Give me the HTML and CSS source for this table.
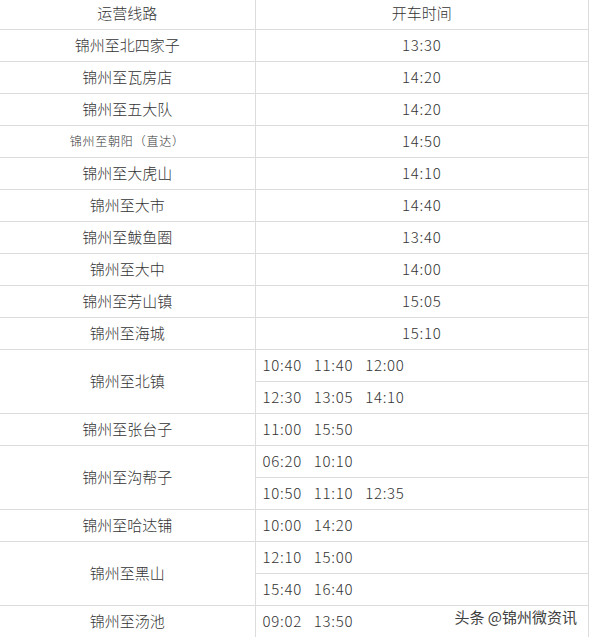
FILE: index.html
```html
<!DOCTYPE html>
<html lang="zh-CN">
<head>
<meta charset="utf-8">
<title>锦州客运班次</title>
<link rel="stylesheet" href="styles.css">
</head>
<body>
<div class="page">
  <table class="schedule">
    <colgroup><col class="c-route"><col class="c-time"></colgroup>
    <tbody>
      <tr><td>运营线路</td><td>开车时间</td></tr>
      <tr><td>锦州至北四家子</td><td class="t">13:30</td></tr>
      <tr><td>锦州至瓦房店</td><td class="t">14:20</td></tr>
      <tr><td>锦州至五大队</td><td class="t">14:20</td></tr>
      <tr><td class="small">锦州至朝阳（直达）</td><td class="t">14:50</td></tr>
      <tr><td>锦州至大虎山</td><td class="t">14:10</td></tr>
      <tr><td>锦州至大市</td><td class="t">14:40</td></tr>
      <tr><td>锦州至鲅鱼圈</td><td class="t">13:40</td></tr>
      <tr><td>锦州至大中</td><td class="t">14:00</td></tr>
      <tr><td>锦州至芳山镇</td><td class="t">15:05</td></tr>
      <tr><td>锦州至海城</td><td class="t">15:10</td></tr>
      <tr><td rowspan="2">锦州至北镇</td><td class="multi"><span>10:40</span><span>11:40</span><span>12:00</span></td></tr>
      <tr><td class="multi"><span>12:30</span><span>13:05</span><span>14:10</span></td></tr>
      <tr><td>锦州至张台子</td><td class="multi"><span>11:00</span><span>15:50</span></td></tr>
      <tr><td rowspan="2">锦州至沟帮子</td><td class="multi"><span>06:20</span><span>10:10</span></td></tr>
      <tr><td class="multi"><span>10:50</span><span>11:10</span><span>12:35</span></td></tr>
      <tr><td>锦州至哈达铺</td><td class="multi"><span>10:00</span><span>14:20</span></td></tr>
      <tr><td rowspan="2">锦州至黑山</td><td class="multi"><span>12:10</span><span>15:00</span></td></tr>
      <tr><td class="multi"><span>15:40</span><span>16:40</span></td></tr>
      <tr><td>锦州至汤池</td><td class="multi"><span>09:02</span><span>13:50</span></td></tr>
    </tbody>
  </table>
  <div class="watermark">头条 @锦州微资讯</div>
</div>
</body>
</html>
```
FILE: styles.css
```css
html, body {
  margin: 0;
  padding: 0;
  background: #fff;
}
.page {
  position: relative;
  width: 589px;
  height: 637px;
  overflow: hidden;
}
.schedule {
  border-collapse: collapse;
  width: 589px;
  margin-top: -3px;
  table-layout: fixed;
  font-family: "Noto Sans CJK SC", "Noto Sans", sans-serif;
  font-size: 15px;
  font-weight: 300;
  color: #333;
}
.c-route { width: 255px; }
.schedule td {
  height: 30px;
  padding: 0 0 1px 0;
  border: 1px solid #dcdcdc;
  text-align: center;
  vertical-align: middle;
  line-height: 20px;
}
.schedule td:first-child { border-left: none; }
.schedule td.small {
  font-size: 12px;
  letter-spacing: 0.8px;
}
.schedule td.t,
.multi span {
  letter-spacing: 0.7px;
}
.schedule td.multi {
  text-align: left;
  padding-left: 7px;
}
.multi span {
  display: inline-block;
  margin-right: 12px;
}
.watermark {
  position: absolute;
  right: 12px;
  bottom: 10px;
  font-family: "Noto Sans CJK SC", sans-serif;
  font-size: 15px;
  color: #404040;
  text-shadow: 0 0 2px #fff, 0 0 2px #fff;
}
```
